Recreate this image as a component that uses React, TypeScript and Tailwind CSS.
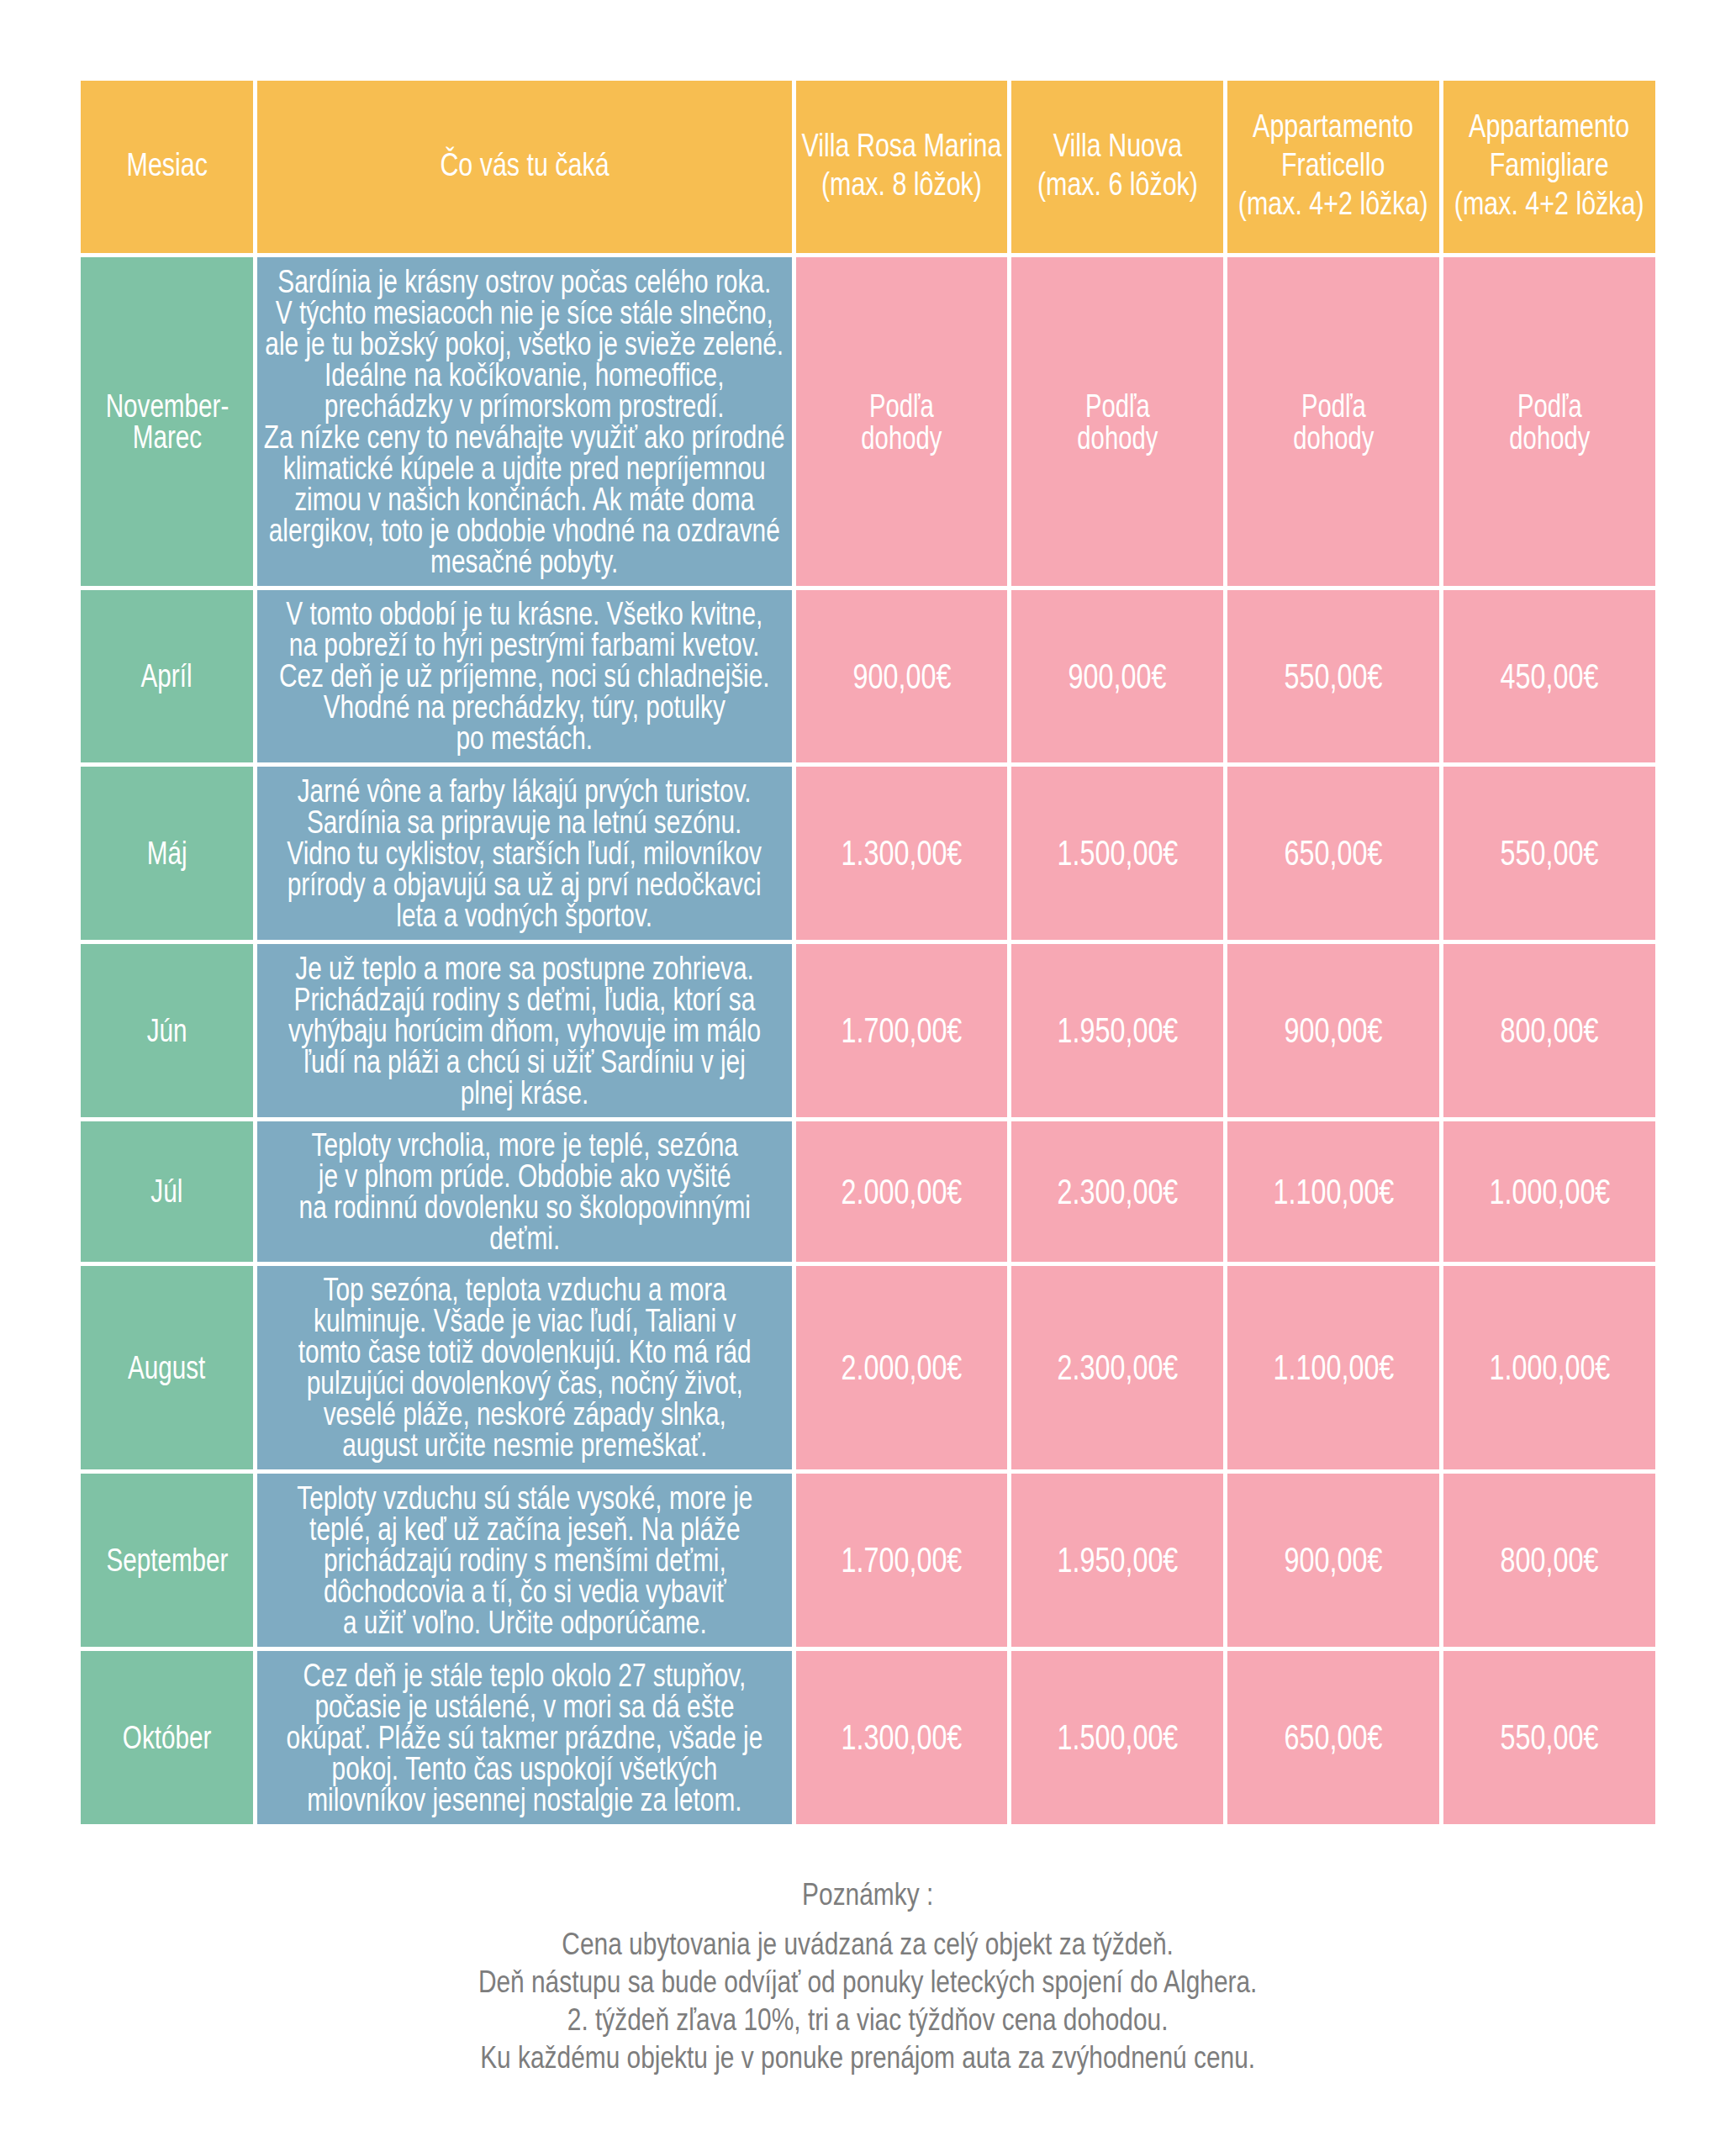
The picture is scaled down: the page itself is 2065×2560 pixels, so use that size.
const headers = [
  ['Mesiac'],
  ['Čo vás tu čaká'],
  ['Villa Rosa Marina', '(max. 8 lôžok)'],
  ['Villa Nuova', '(max. 6 lôžok)'],
  ['Appartamento', 'Fraticello', '(max. 4+2 lôžka)'],
  ['Appartamento', 'Famigliare', '(max. 4+2 lôžka)'],
];

const rows = [
  {
    month: ['November-', 'Marec'],
    text: [
      'Sardínia je krásny ostrov počas celého roka.',
      'V týchto mesiacoch nie je síce stále slnečno,',
      'ale je tu božský pokoj, všetko je svieže zelené.',
      'Ideálne na kočíkovanie, homeoffice,',
      'prechádzky v prímorskom prostredí.',
      'Za nízke ceny to neváhajte využiť ako prírodné',
      'klimatické kúpele a ujdite pred nepríjemnou',
      'zimou v našich končinách. Ak máte doma',
      'alergikov, toto je obdobie vhodné na ozdravné',
      'mesačné pobyty.',
    ],
    prices: null,
  },
  {
    month: ['Apríl'],
    text: [
      'V tomto období je tu krásne. Všetko kvitne,',
      'na pobreží to hýri pestrými farbami kvetov.',
      'Cez deň je už príjemne, noci sú chladnejšie.',
      'Vhodné na prechádzky, túry, potulky',
      'po mestách.',
    ],
    prices: ['900,00€', '900,00€', '550,00€', '450,00€'],
  },
  {
    month: ['Máj'],
    text: [
      'Jarné vône a farby lákajú prvých turistov.',
      'Sardínia sa pripravuje na letnú sezónu.',
      'Vidno tu cyklistov, starších ľudí, milovníkov',
      'prírody a objavujú sa už aj prví nedočkavci',
      'leta a vodných športov.',
    ],
    prices: ['1.300,00€', '1.500,00€', '650,00€', '550,00€'],
  },
  {
    month: ['Jún'],
    text: [
      'Je už teplo a more sa postupne zohrieva.',
      'Prichádzajú rodiny s deťmi, ľudia, ktorí sa',
      'vyhýbaju horúcim dňom, vyhovuje im málo',
      'ľudí na pláži a chcú si užiť Sardíniu v jej',
      'plnej kráse.',
    ],
    prices: ['1.700,00€', '1.950,00€', '900,00€', '800,00€'],
  },
  {
    month: ['Júl'],
    text: [
      'Teploty vrcholia, more je teplé, sezóna',
      'je v plnom prúde. Obdobie ako vyšité',
      'na rodinnú dovolenku so školopovinnými',
      'deťmi.',
    ],
    prices: ['2.000,00€', '2.300,00€', '1.100,00€', '1.000,00€'],
  },
  {
    month: ['August'],
    text: [
      'Top sezóna, teplota vzduchu a mora',
      'kulminuje. Všade je viac ľudí, Taliani v',
      'tomto čase totiž dovolenkujú. Kto má rád',
      'pulzujúci dovolenkový čas, nočný život,',
      'veselé pláže, neskoré západy slnka,',
      'august určite nesmie premeškať.',
    ],
    prices: ['2.000,00€', '2.300,00€', '1.100,00€', '1.000,00€'],
  },
  {
    month: ['September'],
    text: [
      'Teploty vzduchu sú stále vysoké, more je',
      'teplé, aj keď už začína jeseň. Na pláže',
      'prichádzajú rodiny s menšími deťmi,',
      'dôchodcovia a tí, čo si vedia vybaviť',
      'a užiť voľno. Určite odporúčame.',
    ],
    prices: ['1.700,00€', '1.950,00€', '900,00€', '800,00€'],
  },
  {
    month: ['Október'],
    text: [
      'Cez deň je stále teplo okolo 27 stupňov,',
      'počasie je ustálené, v mori sa dá ešte',
      'okúpať. Pláže sú takmer prázdne, všade je',
      'pokoj. Tento čas uspokojí všetkých',
      'milovníkov jesennej nostalgie za letom.',
    ],
    prices: ['1.300,00€', '1.500,00€', '650,00€', '550,00€'],
  },
];

const notes = [
  'Cena ubytovania je uvádzaná za celý objekt za týždeň.',
  'Deň nástupu sa bude odvíjať od ponuky leteckých spojení do Alghera.',
  '2. týždeň zľava 10%, tri a viac týždňov cena dohodou.',
  'Ku každému objektu je v ponuke prenájom auta za zvýhodnenú cenu.',
];

// the sheet uses a condensed face, so lines are squeezed horizontally
function Lines({ lines, className = '' }: { lines: string[]; className?: string }) {
  return (
    <div className={`shrink-0 origin-center ${className}`}>
      {lines.map((l, i) => (
        <span key={i} className="block whitespace-nowrap">
          {l}
        </span>
      ))}
    </div>
  );
}

export default function App() {
  return (
    <div className="min-h-screen overflow-hidden bg-white pt-[96px] pb-[80px] font-['Liberation_Sans',Arial,sans-serif]">
      <div className="mx-auto w-[1873px]">
        {/* price table */}
        <div className="grid grid-cols-[205px_636px_251px_252px_252px_252px] grid-rows-[205px_391px_205px_206px_206px_167px_242px_206px_206px] gap-[5px] text-white text-center">
          {headers.map((h, i) => (
            <div key={i} className="flex items-center justify-center overflow-hidden bg-[#f7be51] pb-[6px] text-[39px] leading-[46px]">
              <Lines lines={h} className="scale-x-[0.78]" />
            </div>
          ))}

          {rows.map((r, ri) => [
            <div key={`m${ri}`} className="flex items-center justify-center overflow-hidden bg-[#7fc2a5] text-[38px] leading-[37px]">
              <Lines lines={r.month} className="scale-x-[0.78]" />
            </div>,
            <div key={`t${ri}`} className="flex items-center justify-center overflow-hidden bg-[#7fabc2] text-[38px] leading-[37px]">
              <Lines lines={r.text} className="scale-x-[0.785]" />
            </div>,
            ...(r.prices
              ? r.prices.map((p, pi) => (
                  <div key={`p${ri}-${pi}`} className="flex items-center justify-center overflow-hidden bg-[#f7a8b4] text-[42px] leading-[44px]">
                    <Lines lines={[p]} className="scale-x-[0.77]" />
                  </div>
                ))
              : [0, 1, 2, 3].map((pi) => (
                  <div key={`p${ri}-${pi}`} className="flex items-center justify-center overflow-hidden bg-[#f7a8b4] text-[38px] leading-[38px]">
                    <Lines lines={['Podľa', 'dohody']} className="scale-x-[0.77]" />
                  </div>
                ))),
          ])}
        </div>

        {/* notes */}
        <div className="mt-[61px] flex justify-center text-center text-[#7d7d7d] text-[36px] leading-[45px]">
          <div className="shrink-0 origin-center scale-x-[0.83]">
            <p className="mb-[14px] whitespace-nowrap">Poznámky :</p>
            {notes.map((n, i) => (
              <p key={i} className="whitespace-nowrap">
                {n}
              </p>
            ))}
          </div>
        </div>
      </div>
    </div>
  );
}
